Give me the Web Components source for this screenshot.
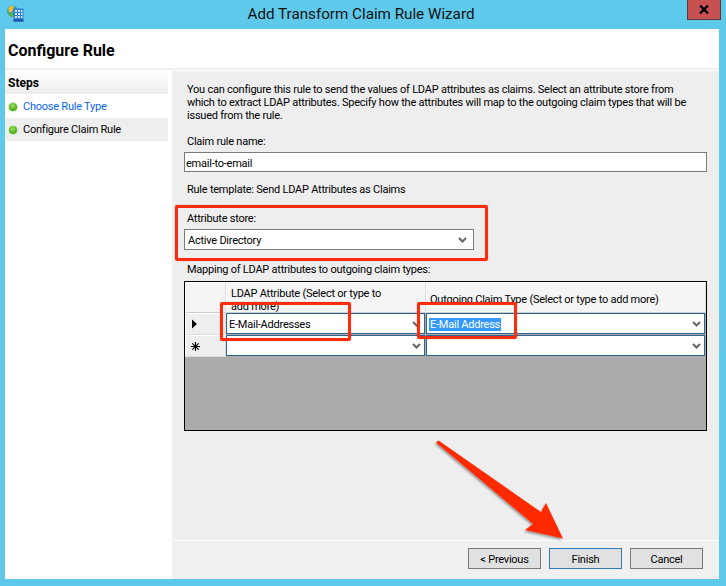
<!DOCTYPE html>
<html>
<head>
<meta charset="utf-8">
<title>Add Transform Claim Rule Wizard</title>
<style>
    html, body { margin: 0; padding: 0; background: #5fc9eb; }
    body { font-family: Roboto, "Liberation Sans", sans-serif; font-size: 11px; letter-spacing: -.235px; color: #000; }
</style>
</head>
<body>
<wizard-window title-text="Add Transform Claim Rule Wizard">
    <wizard-header>Configure Rule</wizard-header>
    <step-list slot="steps">
        <step-item link>Choose Rule Type</step-item>
        <step-item current>Configure Claim Rule</step-item>
    </step-list>
    <rule-form slot="form"></rule-form>
    <wiz-button slot="buttons">&lt; Previous</wiz-button>
    <wiz-button slot="buttons" focused>Finish</wiz-button>
    <wiz-button slot="buttons">Cancel</wiz-button>
</wizard-window>

<script>
const chevron = `<svg width="9" height="6" viewBox="0 0 9 6"><path d="M1 1l3.5 3.5L8 1" fill="none" stroke="#666" stroke-width="2"/></svg>`;

class WizardWindow extends HTMLElement {
    constructor() {
        super();
        this.attachShadow({ mode: "open" });
    }

    connectedCallback() {
        this.shadowRoot.innerHTML = `
            <style>
                :host { display: block; position: relative; width: 726px; height: 586px; overflow: hidden; background: #5fc9eb; }
                .titlebar { height: 29px; display: flex; align-items: center; justify-content: center; font-size: 15.2px; letter-spacing: 0; color: #111; padding: 0 4px 1px 0; box-sizing: border-box; }
                .icon { position: absolute; left: 7px; top: 5px; }
                .close { position: absolute; left: 687px; top: 0; width: 32px; height: 19px; background: #c75050; border: 1px solid #5a3a3a; border-top: 0; display: flex; align-items: center; justify-content: center; }
                .client { margin: 0 7px 0 5px; height: 550px; background: #fff; display: flex; flex-direction: column; }
                .body { flex: 1; display: flex; gap: 4px; min-height: 0; }
                .side { flex: none; width: 163px; }
                .main { flex: 1; min-width: 0; background: #eee; display: flex; flex-direction: column; }
                .content { flex: 1; }
                .buttons { height: 39px; box-sizing: border-box; border-top: 1px solid #fff; background: #f0f0f0; display: flex; justify-content: flex-end; gap: 8px; padding: 7px 16px 0 0; }
                .annot { position: absolute; left: 0; top: 0; pointer-events: none; }
            </style>
            <div class="titlebar">${this.getAttribute("title-text")}</div>
            <svg class="icon" width="17" height="17" viewBox="0 0 17 17">
                <circle cx="5.5" cy="6" r="5.5" fill="#2aa3c9"/>
                <path d="M1 4c1-3 4-4 6-3L6 5 3 9z" fill="#f0b92e"/>
                <path d="M1.5 8l3-1 2 3-1 2.500c-2 0-3.500-2-4-4.500z" fill="#5fb33a"/>
                <rect x="6.500" y="3.500" width="10" height="13" fill="#2f7fd6"/>
                <rect x="6.500" y="14.500" width="10" height="2" fill="#174f9e"/>
                <path d="M8 5h2v2H8zM11 5h2v2h-2zM14 5h1.500v2H14zM8 8h2v2H8zM11 8h2v2h-2zM14 8h1.500v2H14zM8 11h2v2H8zM11 11h2v2h-2zM14 11h1.500v2H14z" fill="#cfe6fb"/>
            </svg>
            <div class="close">
                <svg width="10" height="9" viewBox="0 0 10 9"><path d="M1 .5l8 8M9 .5l-8 8" stroke="#000" stroke-width="2.4" fill="none"/></svg>
            </div>
            <div class="client">
                <slot></slot>
                <div class="body">
                    <div class="side"><slot name="steps"></slot></div>
                    <div class="main">
                        <div class="content"><slot name="form"></slot></div>
                        <div class="buttons"><slot name="buttons"></slot></div>
                    </div>
                </div>
            </div>
            <annotation-box style="left:175px;top:205px;width:313px;height:56px"></annotation-box>
            <annotation-box style="left:220px;top:302px;width:131px;height:39px"></annotation-box>
            <annotation-box style="left:417px;top:302px;width:100px;height:37px"></annotation-box>
            <svg class="annot" width="726" height="586" viewBox="0 0 726 586">
                <defs>
                    <filter id="sh" x="-10%" y="-10%" width="120%" height="120%"><feDropShadow dx="-1" dy="1.500" stdDeviation="1.200" flood-color="#000" flood-opacity=".4"/></filter>
                </defs>
                <path d="M436 442.500L438.500 440.500L541 512L546 503L563 538.500L525 530L533 524Z" fill="#ff2c00" filter="url(#sh)"/>
            </svg>
        `;
    }
}

class WizardHeader extends HTMLElement {
    constructor() {
        super();
        this.attachShadow({ mode: "open" }).innerHTML = `
            <style>
                :host { display: block; height: 39px; line-height: 44px; padding-left: 3px; font-size: 16px; letter-spacing: 0; font-weight: 700; border-bottom: 2px solid #eee; margin-bottom: 1px; }
            </style>
            <slot></slot>
        `;
    }
}

class StepList extends HTMLElement {
    constructor() {
        super();
        this.attachShadow({ mode: "open" }).innerHTML = `
            <style>
                :host { display: block; }
                .title { height: 23px; line-height: 25px; padding-left: 3px; font-size: 12px; letter-spacing: 0; font-weight: 700; background: linear-gradient(#fff, #ececec); margin-bottom: 1px; }
            </style>
            <div class="title">Steps</div>
            <slot></slot>
        `;
    }
}

class StepItem extends HTMLElement {
    constructor() {
        super();
        this.attachShadow({ mode: "open" }).innerHTML = `
            <style>
                :host { display: flex; align-items: center; height: 23px; padding-left: 4px; gap: 6px; }
                :host([link]) { color: #0a66f0; }
                :host([current]) { background: #eee; }
                .dot { flex: none; width: 8px; height: 8px; border-radius: 50%; background: radial-gradient(circle at 45% 35%, #9be35a, #3fa512 75%); box-shadow: 0 0 0 1px #cfe8c0; }
            </style>
            <span class="dot"></span><span><slot></slot></span>
        `;
    }
}

class AnnotationBox extends HTMLElement {
    constructor() {
        super();
        this.attachShadow({ mode: "open" }).innerHTML = `
            <style>
                :host { display: block; position: absolute; box-sizing: border-box; border: 3px solid #ff2c0c; border-radius: 2px; box-shadow: 0 0 1px rgba(120,0,0,.5); pointer-events: none; }
            </style>
        `;
    }
}

class TextBox extends HTMLElement {
    constructor() {
        super();
        this.attachShadow({ mode: "open" }).innerHTML = `
            <style>
                :host { display: flex; align-items: center; justify-content: space-between; box-sizing: border-box; height: 20px; background: #fff; border: 1px solid #7a7a7a; padding: 0 6px 0 1px; }
                :host([combo]) { padding-left: 3px; }
                span { padding-top: 2px; }
            </style>
            <span><slot></slot></span>
            ${this.hasAttribute("combo") ? chevron : ""}
        `;
    }
}

class GridCombo extends HTMLElement {
    constructor() {
        super();
        this.attachShadow({ mode: "open" }).innerHTML = `
            <style>
                :host { display: flex; align-items: center; justify-content: space-between; box-sizing: border-box; height: 21px; background: #fff; border: 1px solid #2f6690; padding: 0 3px 0 2px; }
                span { padding-top: 1px; }
            </style>
            <span><slot></slot></span>
            ${chevron}
        `;
    }
}

class MappingGrid extends HTMLElement {
    constructor() {
        super();
        this.attachShadow({ mode: "open" }).innerHTML = `
            <style>
                :host { display: block; box-sizing: border-box; height: 150px; background: #ababab; border: 1px solid #000; width: 523px; }
                .grid { display: grid; grid-template-columns: 41px 200px 280px; grid-template-rows: 31px 22px 22px; }
                .head { background: #f5f5f5; border: 1px solid #fff; border-bottom-color: #ccc; border-right-color: #ddd; box-sizing: border-box; overflow: hidden; }
                .head.txt { line-height: 13px; padding: 4px 0 0 4px; }
                .head.mid { display: flex; align-items: center; padding: 4px 0 0 3px; }
                .rowhead { background: #eee; border: 1px solid #fff; border-right-color: #ddd; border-bottom-color: #ddd; box-sizing: border-box; display: flex; align-items: center; justify-content: center; padding-right: 20px; }
                .cell { padding: 0 1px 1px 0; box-sizing: border-box; }
                mark { background: #3399ff; color: #fff; display: inline-block; line-height: 13px; padding: 0 1px; }
            </style>
            <div class="grid">
                <div class="head"></div>
                <div class="head txt">LDAP Attribute (Select or type to<br>add more)</div>
                <div class="head mid">Outgoing Claim Type (Select or type to add more)</div>
                <div class="rowhead"><svg width="7" height="10" viewBox="0 0 7 10"><path d="M0 .5l5 4.500-5 4.500z" fill="#000"/></svg></div>
                <div class="cell"><grid-combo>E-Mail-Addresses</grid-combo></div>
                <div class="cell"><grid-combo><mark>E-Mail Address</mark></grid-combo></div>
                <div class="rowhead"><svg width="11" height="11" viewBox="0 0 11 11"><path d="M5.500 1v9M1 5.500h9M2.300 2.300l6.400 6.400M8.700 2.300l-6.400 6.400" stroke="#000" stroke-width="1.100" fill="none"/></svg></div>
                <div class="cell"><grid-combo></grid-combo></div>
                <div class="cell"><grid-combo></grid-combo></div>
            </div>
        `;
    }
}

class RuleForm extends HTMLElement {
    constructor() {
        super();
        this.attachShadow({ mode: "open" }).innerHTML = `
            <style>
                :host { display: block; padding: 12px 12px 0 12px; line-height: 13px; }
                p { margin: 0 0 0 3px; white-space: nowrap; }
                .label { margin-left: 3px; }
                text-box { margin-top: 4px; }
            </style>
            <p>You can configure this rule to send the values of LDAP attributes as claims. Select an attribute store from<br>which to extract LDAP attributes. Specify how the attributes will map to the outgoing claim types that will be<br>issued from the rule.</p>
            <div class="label" style="margin-top:13px">Claim rule name:</div>
            <text-box style="width:523px">email-to-email</text-box>
            <div class="label" style="margin-top:11px">Rule template: Send LDAP Attributes as Claims</div>
            <div class="label" style="margin-top:16px">Attribute store:</div>
            <text-box combo style="width:290px;height:21px">Active Directory</text-box>
            <div class="label" style="margin-top:13px">Mapping of LDAP attributes to outgoing claim types:</div>
            <mapping-grid style="margin-top:5px"></mapping-grid>
        `;
    }
}

class WizButton extends HTMLElement {
    constructor() {
        super();
        this.attachShadow({ mode: "open" }).innerHTML = `
            <style>
                :host { display: flex; align-items: center; justify-content: center; box-sizing: border-box; width: 73px; height: 21px; padding-top: 2px; background: #e1e1e1; border: 1px solid #7a7a7a; }
                :host([focused]) { border-color: #2f7ab9; }
            </style>
            <slot></slot>
        `;
    }
}

customElements.define("annotation-box", AnnotationBox);
customElements.define("text-box", TextBox);
customElements.define("grid-combo", GridCombo);
customElements.define("mapping-grid", MappingGrid);
customElements.define("rule-form", RuleForm);
customElements.define("wiz-button", WizButton);
customElements.define("step-item", StepItem);
customElements.define("step-list", StepList);
customElements.define("wizard-header", WizardHeader);
customElements.define("wizard-window", WizardWindow);
</script>
</body>
</html>
